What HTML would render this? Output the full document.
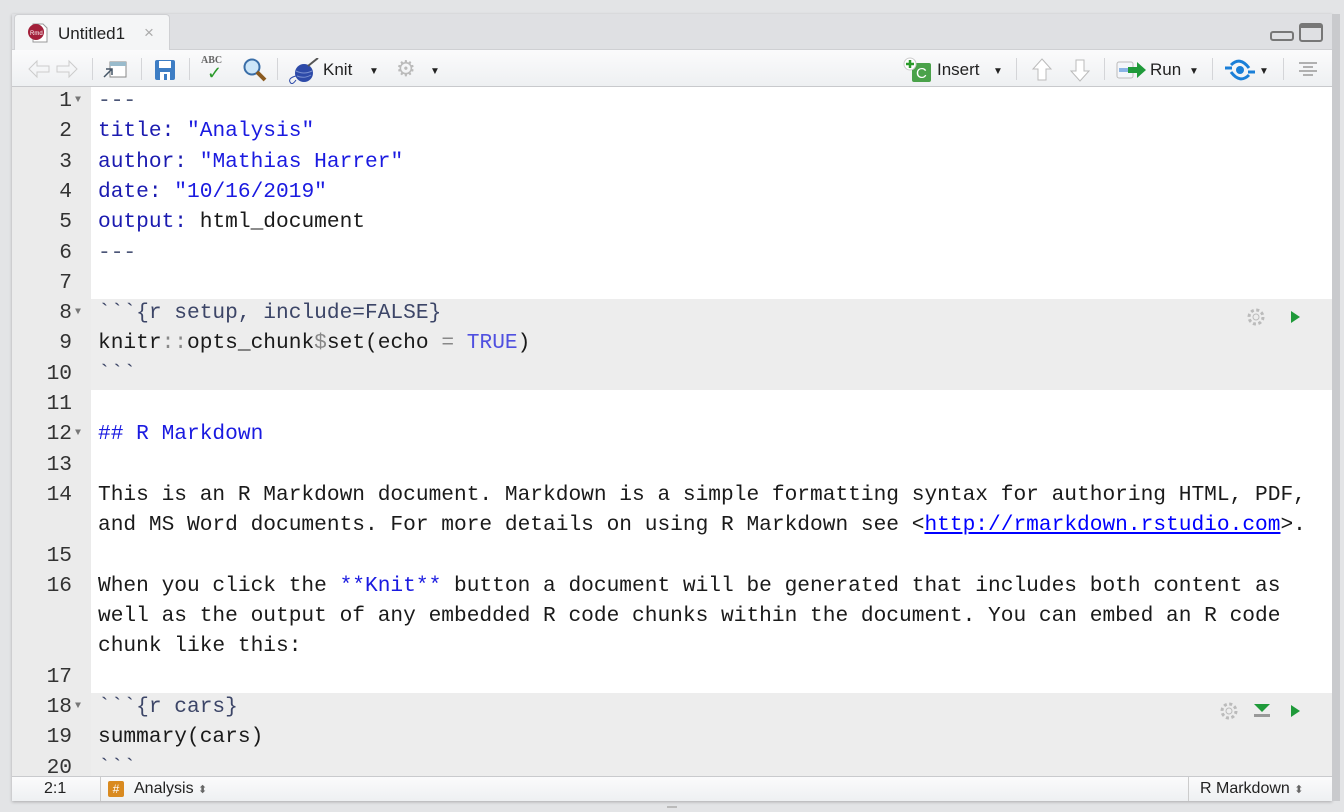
<!DOCTYPE html>
<html><head><meta charset="utf-8"><style>
*{margin:0;padding:0;box-sizing:border-box}
body{width:1344px;height:812px;background:#e3e4e6;font-family:"Liberation Sans",sans-serif;position:relative;overflow:hidden}
.panel{position:absolute;left:12px;top:14px;width:1320px;height:787px;background:#f6f6f7;box-shadow:0 1px 3px rgba(0,0,0,.25)}
.tabstrip{position:absolute;left:12px;top:14px;width:1320px;height:36px;background:#dfe0e3;border-bottom:1px solid #cfd0d3}
.tab{position:absolute;left:14px;top:14px;width:156px;height:37px;background:#f4f5f6;border-radius:4px 4px 0 0;border:1px solid #cfd0d3;border-bottom:none}
.toolbar{position:absolute;left:12px;top:50px;width:1320px;height:37px;background:linear-gradient(#fbfbfc,#eef0f2);border-bottom:1px solid #c8c9cc}
.tb{position:absolute;font-size:17px;color:#222;top:60px}
.sep{position:absolute;top:58px;width:1px;height:22px;background:#d4d5d8}
.editor{position:absolute;left:12px;top:87px;width:1320px;height:689px;background:#fff;overflow:hidden}
.gutter{position:absolute;left:0;top:0;width:79px;height:689px;background:#ebebeb}
.row{position:absolute;left:0;width:1320px;height:30.3px;font-family:"Liberation Mono",monospace;font-size:21.2px;line-height:30.3px;white-space:pre;color:#1a1a1a}
.row .n{position:absolute;left:0;width:60px;text-align:right;color:#333}
.row .f{position:absolute;left:63px;top:0;font-size:10px;color:#777}
.row .t{position:absolute;left:86px}
.chunk{position:absolute;left:79px;width:1241px;background:#ededed}
.d{color:#4b5577}.k{color:#1b1bb0}.s{color:#1a1ae0}.h{color:#3c4567}.tr{color:#5050e0}.op{color:#888}
.status{position:absolute;left:12px;top:776px;width:1320px;height:25px;background:linear-gradient(#fbfbfc,#eef0f2);border-top:1px solid #c9cacd;font-size:16px;color:#222}
.scroll{position:absolute;left:1332px;top:14px;width:8px;height:787px;background:#c9cacd}
</style></head><body>
<div class="panel"></div>
<div class="scroll"></div>
<div class="tabstrip"></div>
<div class="tab">
 <svg style="position:absolute;left:12px;top:7px" width="22" height="22"><path d="M6 2h10l4 4v14H6z" fill="#fff" stroke="#999"/><circle cx="9" cy="10" r="8" fill="#a3203a"/><text x="3" y="13" font-size="6" fill="#fff" font-family="Liberation Sans">Rmd</text></svg>
 <span style="position:absolute;left:43px;top:9px;font-size:17px;color:#222">Untitled1</span>
 <span style="position:absolute;left:129px;top:8px;font-size:17px;color:#aaa">×</span>
</div>
<svg style="position:absolute;left:1270px;top:22px" width="58" height="22"><rect x="1" y="10" width="22" height="8" rx="2" fill="none" stroke="#777" stroke-width="2"/><rect x="30" y="2" width="22" height="17" rx="2" fill="none" stroke="#777" stroke-width="2"/><rect x="30" y="2" width="22" height="4" fill="#777"/></svg>
<div class="toolbar"></div>
<svg style="position:absolute;left:27px;top:59px" width="52" height="20"><path d="M2 10l8-8v5h12v6H10v5z" fill="none" stroke="#ccc"/><path d="M50 10l-8-8v5H30v6h12v5z" fill="none" stroke="#ccc"/></svg>
<div class="sep" style="left:92px"></div>
<svg style="position:absolute;left:102px;top:59px" width="26" height="22"><rect x="8" y="3" width="16" height="15" fill="#fff" stroke="#888"/><rect x="8" y="3" width="16" height="4" fill="#9bc"/><path d="M2 18l8-8M4 10h6v6" stroke="#456" fill="none" stroke-width="1.5"/></svg>
<div class="sep" style="left:141px"></div>
<svg style="position:absolute;left:154px;top:59px" width="22" height="22"><rect x="1" y="1" width="20" height="20" rx="2" fill="#3d7dc4"/><rect x="5" y="2" width="12" height="7" fill="#fff"/><rect x="6" y="13" width="10" height="8" fill="#fff"/><rect x="10" y="15" width="3" height="6" fill="#3d7dc4"/></svg>
<div class="sep" style="left:189px"></div>
<span style="position:absolute;left:201px;top:55px;font:bold 10px 'Liberation Serif',serif;color:#666">ABC</span>
<span style="position:absolute;left:207px;top:63px;font-size:18px;color:#2a9a2a">✓</span>
<svg style="position:absolute;left:242px;top:57px" width="26" height="26"><circle cx="10" cy="10" r="7.5" fill="#cde6f8" stroke="#3a6ea8" stroke-width="2"/><path d="M15 15l8 8" stroke="#8a5a20" stroke-width="4"/></svg>
<div class="sep" style="left:277px"></div>
<svg style="position:absolute;left:286px;top:58px" width="34" height="26"><circle cx="18" cy="15" r="9" fill="#2d4aa8"/><path d="M10 13q8 4 16 0M11 18q7 3 14-1" stroke="#7a90d0" fill="none"/><path d="M22 8l10-8" stroke="#555" stroke-width="2"/><path d="M10 18q-8 2-6 6t6-2" stroke="#2d4aa8" fill="none"/></svg>
<span class="tb" style="left:323px">Knit</span>
<span class="tb" style="left:369px;font-size:10px;top:66px">▼</span>
<span class="tb" style="left:396px;font-size:22px;top:56px;color:#bbb">⚙</span>
<span class="tb" style="left:430px;font-size:10px;top:66px">▼</span>
<svg style="position:absolute;left:903px;top:57px" width="30" height="26"><rect x="9" y="6" width="19" height="19" rx="2" fill="#4aa24a"/><text x="13" y="21" font-size="15" fill="#fff" font-family="Liberation Sans">C</text><circle cx="7" cy="7" r="6" fill="#fff" stroke="#ccc"/><path d="M7 3v8M3 7h8" stroke="#2a9a2a" stroke-width="2.5"/></svg>
<span class="tb" style="left:937px">Insert</span>
<span class="tb" style="left:993px;font-size:10px;top:66px">▼</span>
<div class="sep" style="left:1016px"></div>
<svg style="position:absolute;left:1031px;top:57px" width="60" height="26"><path d="M11 2l9 10h-5v11H7V12H2z" fill="#fff" stroke="#bbb"/><path d="M49 24l9-10h-5V3h-8v11h-5z" fill="#fff" stroke="#bbb"/></svg>
<div class="sep" style="left:1104px"></div>
<svg style="position:absolute;left:1116px;top:59px" width="32" height="22"><rect x="1" y="3" width="16" height="16" rx="2" fill="#f4f6fa" stroke="#bbb"/><rect x="3" y="9" width="10" height="4" fill="#8ab4e6"/><path d="M12 8h9V3l9 8-9 8v-5h-9z" fill="#1f9a3a"/></svg>
<span class="tb" style="left:1150px">Run</span>
<span class="tb" style="left:1189px;font-size:10px;top:66px">▼</span>
<div class="sep" style="left:1212px"></div>
<svg style="position:absolute;left:1224px;top:59px" width="32" height="22"><path d="M1 9h7M24 13h7" stroke="#1a7fd8" stroke-width="3"/><path d="M7 6q9-9 18 3M25 16q-9 9-18-3" stroke="#1a7fd8" stroke-width="3" fill="none"/><circle cx="16" cy="11" r="4" fill="#1a7fd8"/></svg>
<span class="tb" style="left:1259px;font-size:10px;top:66px">▼</span>
<div class="sep" style="left:1283px"></div>
<svg style="position:absolute;left:1298px;top:61px" width="20" height="16"><path d="M1 2h18M5 6h10M1 10h18M5 14h10" stroke="#999" stroke-width="1.5"/></svg>

<div class="editor">
 <div class="gutter"></div>
 <div class="chunk" style="top:212px;height:91px"></div>
 <div class="chunk" style="top:606px;height:90px"></div>
 <svg style="position:absolute;left:1233px;top:219px" width="22" height="22"><circle cx="11" cy="11" r="7" fill="none" stroke="#bbb" stroke-width="3" stroke-dasharray="3 2.5"/><circle cx="11" cy="11" r="3" fill="none" stroke="#bbb"/></svg>
 <svg style="position:absolute;left:1278px;top:223px" width="12" height="14"><path d="M1 1l9 6-9 6z" fill="#1f9a3a"/></svg>
 <svg style="position:absolute;left:1206px;top:613px" width="22" height="22"><circle cx="11" cy="11" r="7" fill="none" stroke="#bbb" stroke-width="3" stroke-dasharray="3 2.5"/><circle cx="11" cy="11" r="3" fill="none" stroke="#bbb"/></svg>
 <svg style="position:absolute;left:1240px;top:616px" width="20" height="16"><path d="M2 1h16L10 9z" fill="#1f9a3a"/><rect x="2" y="11" width="16" height="3" fill="#999"/></svg>
 <svg style="position:absolute;left:1278px;top:617px" width="12" height="14"><path d="M1 1l9 6-9 6z" fill="#1f9a3a"/></svg>

 <div class="row" style="top:-1px"><span class="n">1</span><span class="f">▼</span><span class="t d">---</span></div>
 <div class="row" style="top:29.3px"><span class="n">2</span><span class="t"><span class="k">title:</span> <span class="s">"Analysis"</span></span></div>
 <div class="row" style="top:59.6px"><span class="n">3</span><span class="t"><span class="k">author:</span> <span class="s">"Mathias Harrer"</span></span></div>
 <div class="row" style="top:89.9px"><span class="n">4</span><span class="t"><span class="k">date:</span> <span class="s">"10/16/2019"</span></span></div>
 <div class="row" style="top:120.2px"><span class="n">5</span><span class="t"><span class="k">output:</span> html_document</span></div>
 <div class="row" style="top:150.5px"><span class="n">6</span><span class="t d">---</span></div>
 <div class="row" style="top:180.8px"><span class="n">7</span></div>
 <div class="row" style="top:211.1px"><span class="n">8</span><span class="f">▼</span><span class="t h">&#96;&#96;&#96;{r setup, include=FALSE}</span></div>
 <div class="row" style="top:241.4px"><span class="n">9</span><span class="t">knitr<span class="op">::</span>opts_chunk<span class="op">&#36;</span>set(echo <span class="op">=</span> <span class="tr">TRUE</span>)</span></div>
 <div class="row" style="top:271.7px"><span class="n">10</span><span class="t h">&#96;&#96;&#96;</span></div>
 <div class="row" style="top:302px"><span class="n">11</span></div>
 <div class="row" style="top:332.3px"><span class="n">12</span><span class="f">▼</span><span class="t s">## R Markdown</span></div>
 <div class="row" style="top:362.6px"><span class="n">13</span></div>
 <div class="row" style="top:392.9px"><span class="n">14</span><span class="t">This is an R Markdown document. Markdown is a simple formatting syntax for authoring HTML, PDF,</span></div>
 <div class="row" style="top:423.2px"><span class="t">and MS Word documents. For more details on using R Markdown see &lt;<span style="color:#00f;text-decoration:underline">http://rmarkdown.rstudio.com</span>&gt;.</span></div>
 <div class="row" style="top:453.5px"><span class="n">15</span></div>
 <div class="row" style="top:483.8px"><span class="n">16</span><span class="t">When you click the <span class="s">**Knit**</span> button a document will be generated that includes both content as</span></div>
 <div class="row" style="top:514.1px"><span class="t">well as the output of any embedded R code chunks within the document. You can embed an R code</span></div>
 <div class="row" style="top:544.4px"><span class="t">chunk like this:</span></div>
 <div class="row" style="top:574.7px"><span class="n">17</span></div>
 <div class="row" style="top:605px"><span class="n">18</span><span class="f">▼</span><span class="t h">&#96;&#96;&#96;{r cars}</span></div>
 <div class="row" style="top:635.3px"><span class="n">19</span><span class="t">summary(cars)</span></div>
 <div class="row" style="top:665.6px"><span class="n">20</span><span class="t h">&#96;&#96;&#96;</span></div>
</div>

<div class="status">
 <span style="position:absolute;left:32px;top:3px">2:1</span>
 <div style="position:absolute;left:88px;top:0;width:1px;height:24px;background:#ccc"></div>
 <span style="position:absolute;left:96px;top:4px;width:16px;height:16px;background:#d98a20;color:#fff;font-size:12px;text-align:center;line-height:16px;border-radius:2px">#</span>
 <span style="position:absolute;left:122px;top:3px">Analysis <span style="font-size:11px;color:#666">⬍</span></span>
 <div style="position:absolute;left:1176px;top:0;width:1px;height:24px;background:#ccc"></div>
 <span style="position:absolute;left:1188px;top:3px">R Markdown <span style="font-size:11px;color:#666">⬍</span></span>
</div>
<div style="position:absolute;left:667px;top:806px;width:10px;height:2px;background:#bbb"></div>
</body></html>
